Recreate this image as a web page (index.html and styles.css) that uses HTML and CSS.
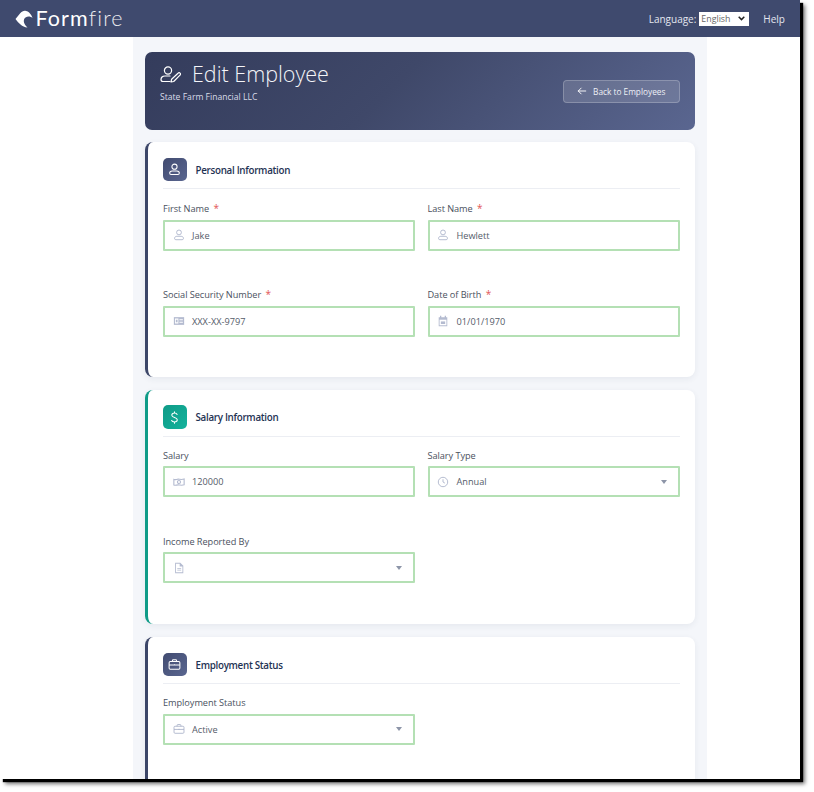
FILE: index.html
```html
<!DOCTYPE html>
<html lang="en">
<head>
<meta charset="utf-8">
<title>Edit Employee</title>
<link rel="stylesheet" href="styles.css">
</head>
<body>
<div class="window">
  <header class="topbar">
    <a class="logo">
      <svg class="logo-mark" viewBox="0 0 18 18"><path fill="#fff" d="M.5 9 5 3.500C7 1.200 9 .5 11 1c3 .5 5.500 3.500 6.500 7-2-2-5-2-7-.5-2.500 2-2.500 6 2 10C7 17 3.500 13 .5 9z"/></svg>
      <span class="logo-form">Form</span><span class="logo-fire">fire</span>
    </a>
    <div class="topnav">
      <label class="lang">Language:
        <select class="lang-select"><option>English</option></select>
      </label>
      <a class="help">Help</a>
    </div>
  </header>

  <main class="page">
    <section class="hero">
      <div class="hero-text">
        <h1 class="hero-title">
          <svg class="hero-icon" viewBox="0 0 21 17" fill="none" stroke="#fff" stroke-width="1.200" stroke-linecap="round" stroke-linejoin="round"><circle cx="8" cy="4.500" r="3.600"/><path d="M10 10H5c-2.500 0-4 1.700-4 3.500 0 1.200.8 2 2 2h7"/><path d="m11 16 .6-2.800L18 7.200c.7-.7 1.500-.7 2.100 0 .6.6.5 1.400-.1 2l-6.300 6.300z"/></svg>
          Edit Employee
        </h1>
        <p class="hero-sub">State Farm Financial LLC</p>
      </div>
      <a class="back-btn">
        <svg class="back-icon" viewBox="0 0 12 12" fill="none" stroke="#fff" stroke-width="1.100" stroke-linecap="round" stroke-linejoin="round"><path d="M10.500 6h-9M5 2.500 1.500 6 5 9.500"/></svg>
        Back to Employees
      </a>
    </section>

    <section class="card">
      <div class="card-head">
        <span class="badge">
          <svg class="badge-icon" viewBox="0 0 14 14" fill="none" stroke="#fff" stroke-width="1.100"><circle cx="7" cy="4" r="2.800"/><path d="M4.500 8.500h5c1.500 0 2.700 1 2.700 2.400 0 1-.6 1.600-1.500 1.600H3.300c-.9 0-1.500-.6-1.500-1.600 0-1.400 1.200-2.400 2.700-2.400z"/></svg>
        </span>
        <h2 class="card-title">Personal Information</h2>
      </div>
      <div class="grid">
        <div class="field">
          <div class="label">First Name <span class="req">*</span></div>
          <div class="control">
            <svg class="ficon" viewBox="0 0 14 14" fill="none" stroke="#aab2c9" stroke-width="1"><circle cx="7" cy="4" r="2.800"/><path d="M4.500 8.500h5c1.500 0 2.700 1 2.700 2.400 0 1-.6 1.600-1.500 1.600H3.300c-.9 0-1.500-.6-1.500-1.600 0-1.400 1.200-2.400 2.700-2.400z"/></svg>
            <span class="value">Jake</span>
          </div>
        </div>
        <div class="field">
          <div class="label">Last Name <span class="req">*</span></div>
          <div class="control">
            <svg class="ficon" viewBox="0 0 14 14" fill="none" stroke="#aab2c9" stroke-width="1"><circle cx="7" cy="4" r="2.800"/><path d="M4.500 8.500h5c1.500 0 2.700 1 2.700 2.400 0 1-.6 1.600-1.500 1.600H3.300c-.9 0-1.500-.6-1.500-1.600 0-1.400 1.200-2.400 2.700-2.400z"/></svg>
            <span class="value">Hewlett</span>
          </div>
        </div>
        <div class="field">
          <div class="label">Social Security Number <span class="req">*</span></div>
          <div class="control">
            <svg class="ficon" viewBox="0 0 14 14"><path fill="#b4bbd0" d="M1 2.500h12v9H1z"/><path fill="#fff" d="M2.300 4h4v6h-4zM7.500 5h4v1h-4zM7.500 8h4v1h-4z"/><path fill="#b4bbd0" d="M3.300 5.500h2v3h-2z"/></svg>
            <span class="value">XXX-XX-9797</span>
          </div>
        </div>
        <div class="field">
          <div class="label">Date of Birth <span class="req">*</span></div>
          <div class="control">
            <svg class="ficon" viewBox="0 0 14 14"><path fill="#b4bbd0" d="M3.500 1H5v1.500h4V1h1.500v1.500H12V13H2V2.500h1.500z"/><path fill="#fff" d="M3 5.500h8V12H3z"/><path fill="#b4bbd0" d="M4.500 7.500h5v3h-5z"/></svg>
            <span class="value">01/01/1970</span>
          </div>
        </div>
      </div>
    </section>

    <section class="card card-green">
      <div class="card-head">
        <span class="badge badge-green">
          <svg class="badge-icon" viewBox="0 0 14 14" fill="none" stroke="#fff" stroke-width="1.100" stroke-linecap="round"><path d="M7 .8v1.400M7 11.800v1.400M9.800 3.800C9.400 2.800 8.300 2.200 7 2.200c-1.700 0-2.900.9-2.900 2.300 0 3 5.900 1.800 5.900 4.900 0 1.500-1.300 2.400-3 2.400-1.500 0-2.700-.6-3.100-1.600"/></svg>
        </span>
        <h2 class="card-title">Salary Information</h2>
      </div>
      <div class="grid">
        <div class="field">
          <div class="label">Salary</div>
          <div class="control">
            <svg class="ficon" viewBox="0 0 14 14" fill="none" stroke="#b4bbd0" stroke-width="1.300"><path d="M1 4c2 .8 3-.3 5-.3s4 .9 7-.2v6.800c-3 1-5 .1-7 .1s-3 .9-5 .2z"/><circle cx="7" cy="7" r="1.800"/></svg>
            <span class="value">120000</span>
          </div>
        </div>
        <div class="field">
          <div class="label">Salary Type</div>
          <div class="control">
            <svg class="ficon" viewBox="0 0 14 14" fill="none" stroke="#aab2c9" stroke-width="1"><circle cx="7" cy="7" r="5.500"/><path d="M7 3.800V7l2.200 1.300"/></svg>
            <span class="value">Annual</span>
            <span class="caret"></span>
          </div>
        </div>
        <div class="field">
          <div class="label">Income Reported By</div>
          <div class="control">
            <svg class="ficon" viewBox="0 0 14 14"><path fill="#b4bbd0" d="M2.500 1h6L12 4.500V13H2.500z"/><path fill="#fff" d="M3.500 2h4.300v3.200H11V12H3.500z"/><path fill="#b4bbd0" d="M5 7h4.500v1H5zM5 9h4.500v1H5z"/></svg>
            <span class="value"></span>
            <span class="caret"></span>
          </div>
        </div>
      </div>
    </section>

    <section class="card">
      <div class="card-head">
        <span class="badge">
          <svg class="badge-icon" viewBox="0 0 14 14" fill="none" stroke="#fff" stroke-width="1.100"><rect x="1.200" y="3.800" width="11.600" height="8.200" rx="1.200"/><path d="M4.800 3.800V2.600c0-.5.300-.8.800-.8h2.800c.5 0 .8.300.8.800v1.200M1.200 7.500h11.600M7 6.800v1.400"/></svg>
        </span>
        <h2 class="card-title">Employment Status</h2>
      </div>
      <div class="grid">
        <div class="field">
          <div class="label">Employment Status</div>
          <div class="control">
            <svg class="ficon" viewBox="0 0 14 14" fill="none" stroke="#aab2c9" stroke-width="1"><rect x="1.200" y="3.800" width="11.600" height="8.200" rx="1.200"/><path d="M4.800 3.800V2.600c0-.5.300-.8.800-.8h2.800c.5 0 .8.300.8.800v1.200M1.200 7.500h11.600M7 6.800v1.400"/></svg>
            <span class="value">Active</span>
            <span class="caret"></span>
          </div>
        </div>
      </div>
    </section>
  </main>
</div>
</body>
</html>
```

FILE: styles.css
```css
* { box-sizing: border-box; }

html, body {
  margin: 0;
  padding: 0;
  background: #fff;
  overflow: hidden;
}

body {
  height: 792px;
  font-family: "Open Sans", "Liberation Sans", sans-serif;
}

.window {
  width: 800px;
  height: 779px;
  background: #fff;
  overflow: hidden;
  box-shadow: 3px 3px 1px #000, 5px 5px 4px rgba(0, 0, 0, .55);
}

.topbar {
  height: 37px;
  background: #3f4a6e;
  display: flex;
  align-items: center;
  justify-content: space-between;
  padding: 0 15px;
}

.logo {
  display: flex;
  align-items: center;
  color: #fff;
  font-family: "Lato", sans-serif;
  font-size: 21.500px;
  line-height: 37px;
  letter-spacing: 1.100px;
}

.logo-mark { width: 18px; height: 18px; margin-right: 2.500px; }
.logo-form { font-weight: 400; }
.logo-fire { font-weight: 300; opacity: .9; }

.topnav {
  display: flex;
  align-items: center;
  gap: 14px;
  color: #e4e7f0;
  font-size: 10px;
}

.lang { display: flex; align-items: center; gap: 3px; }

.lang-select {
  appearance: none;
  width: 50px;
  height: 14px;
  padding: 0 0 0 2px;
  border: 0;
  border-radius: 0;
  background: #fff url("data:image/svg+xml,%3Csvg xmlns='http://www.w3.org/2000/svg' viewBox='0 0 7 5'%3E%3Cpath d='M.7.8 3.500 3.600 6.300.8' fill='none' stroke='%23222' stroke-width='1.500'/%3E%3C/svg%3E") no-repeat right 4px center / 7px 5px;
  color: #666;
  font: 8.800px "Open Sans", sans-serif;
}

.help { font-size: 10px; }

.page {
  width: 574px;
  margin-left: 133px;
  height: 742px;
  padding: 15.300px 12.500px 0 12px;
  background: #f4f6fa;
}

.hero {
  height: 77.400px;
  border-radius: 7px;
  background: linear-gradient(135deg, #343c5c 0%, #3f4869 45%, #5a6690 100%);
  display: flex;
  justify-content: space-between;
  align-items: flex-start;
  padding: 8px 15px;
  color: #fff;
}

.hero-title {
  margin: 0;
  display: flex;
  align-items: center;
  gap: 11px;
  font-size: 21.500px;
  font-weight: 300;
  line-height: 28px;
  color: #f4f5f9;
}

.hero-icon { width: 21px; height: 17px; }

.hero-sub {
  margin: 3px 0 0;
  font-size: 8.600px;
  line-height: 13px;
  color: #d9dce8;
}

.back-btn {
  margin-top: 19.500px;
  width: 116.500px;
  height: 23px;
  display: flex;
  align-items: center;
  justify-content: center;
  gap: 6px;
  border: 1px solid rgba(255, 255, 255, .22);
  border-radius: 4px;
  background: rgba(255, 255, 255, .14);
  font-size: 8.300px;
  font-weight: 500;
  color: #eef0f6;
}

.back-icon { width: 10px; height: 10px; }

.card {
  margin-top: 12.800px;
  height: 234.600px;
  padding: 15.500px 15px 0 15px;
  border-left: 3px solid #3c4668;
  border-radius: 8px;
  background: #fff;
  box-shadow: 0 2px 6px rgba(40, 50, 80, .07);
}

.card-green { border-left-color: #0f9b87; }

.card-head {
  display: flex;
  align-items: center;
  gap: 9px;
  padding-bottom: 7px;
  border-bottom: 1px solid #eceef3;
}

.badge {
  width: 23.500px;
  height: 23.500px;
  border-radius: 5px;
  background: linear-gradient(135deg, #414b70, #5a6690);
  display: flex;
  align-items: center;
  justify-content: center;
}

.badge-green { background: linear-gradient(135deg, #0f9b87, #14b29c); }
.badge-icon { width: 13px; height: 13px; }

.card-title {
  margin: 0;
  padding-top: 1px;
  font-size: 9.800px;
  font-weight: 600;
  letter-spacing: -.3px;
  color: #1f3354;
}

.grid {
  display: grid;
  grid-template-columns: 252px 252px;
  column-gap: 12.500px;
  padding-top: 12px;
}

.field { height: 86px; }

.label {
  font-size: 9.200px;
  line-height: 14px;
  letter-spacing: -.05px;
  color: #4a5160;
  margin-bottom: 3.500px;
}

.req { color: #e25555; margin-left: 2px; font-size: 10px; }

.control {
  height: 31px;
  display: flex;
  align-items: center;
  padding: 0 11px 0 7.500px;
  border: 2px solid #b4e0b4;
  border-radius: 1px;
  background: #fff;
}

.ficon { width: 12px; height: 12px; flex: none; }

.value {
  margin-left: 7.500px;
  flex: 1;
  font-size: 9.200px;
  color: #555c6a;
}

.caret {
  width: 0;
  height: 0;
  border-left: 3.500px solid transparent;
  border-right: 3.500px solid transparent;
  border-top: 4px solid #8d95a8;
}
```
